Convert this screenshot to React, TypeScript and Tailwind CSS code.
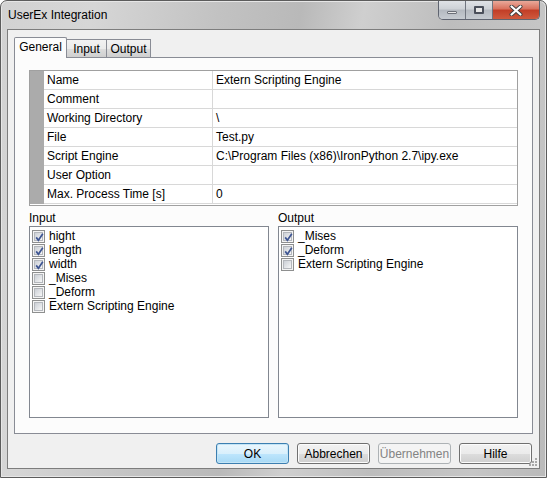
import React from "react";

const font = { fontFamily: '"Liberation Sans", Arial, sans-serif' };

function Check({ checked, label }: { checked: boolean; label: string }) {
  return (
    <div className="flex h-[14px] items-center">
      <div className="relative h-[13px] w-[13px] shrink-0 border border-[#8e8f8f] bg-[#f4f4f4] p-[1px]">
        <div className="h-full w-full border border-[#b4b7bc] bg-[linear-gradient(135deg,#cbcfd5_0%,#e4e6e9_60%,#f7f7f7_100%)]" />
        {checked && (
          <svg className="absolute left-[1px] top-[1px]" width="11" height="11" viewBox="0 0 11 11">
            <path d="M2.2 5.4 L4.4 8.2 L8.8 1.8" fill="none" stroke="#3e5592" strokeWidth="1.7" />
          </svg>
        )}
      </div>
      <span className="ml-[4px] whitespace-nowrap text-[12px] leading-[14px] text-black">{label}</span>
    </div>
  );
}

function ListBox({ title, items }: { title: string; items: [string, boolean][] }) {
  return (
    <div className="flex w-[240px] flex-col">
      <div className="h-[16px] text-[12px] leading-[16px] text-black">{title}</div>
      <div className="flex h-[192px] flex-col border border-[#828790] bg-white pl-[2px] pt-[2px]">
        {items.map(([l, c]) => (
          <Check key={l} label={l} checked={c} />
        ))}
      </div>
    </div>
  );
}

function Btn({ label, def, disabled }: { label: string; def?: boolean; disabled?: boolean }) {
  const cls = def
    ? "border-[#3c7fb1] bg-[linear-gradient(#eaf6fd_0%,#d9f0fc_50%,#bee6fd_51%,#a7d9f5_100%)] text-black shadow-[inset_0_0_0_1px_#c4e5f6]"
    : disabled
    ? "border-[#adb2b5] bg-[#f4f4f4] text-[#838383]"
    : "border-[#707070] bg-[linear-gradient(#f2f2f2_0%,#ebebeb_50%,#dddddd_51%,#cfcfcf_100%)] text-black shadow-[inset_0_0_0_1px_#fcfcfc]";
  return (
    <div className={`flex h-[21px] w-[73px] items-center justify-center rounded-[3px] border text-[12px] ${cls}`}>
      {label}
    </div>
  );
}

const rows: [string, string][] = [
  ["Name", "Extern Scripting Engine"],
  ["Comment", ""],
  ["Working Directory", "\\"],
  ["File", "Test.py"],
  ["Script Engine", "C:\\Program Files (x86)\\IronPython 2.7\\ipy.exe"],
  ["User Option", ""],
  ["Max. Process Time [s]", "0"],
];

export default function App() {
  return (
    <div className="h-[479px] w-[548px] overflow-hidden bg-white" style={font}>
      <div className="flex h-[478px] w-[547px] flex-col rounded-t-[7px] border border-[#5c5c5c] bg-[linear-gradient(100deg,#d2d2d2_0%,#d6d6d6_15%,#c2c2c2_35%,#b9b9b9_48%,#cfcfcf_58%,#bdbdbd_72%,#c6c6c6_88%,#bababa_100%)] shadow-[inset_0_0_0_1px_#e6e6e6]">
        <div className="relative flex h-[28px] shrink-0 items-start">
          <div className="pl-[7px] pt-[6px] text-[12px] leading-[16px] text-black">UserEx Integration</div>
          <div className="ml-auto mr-[6px] flex h-[19px] overflow-hidden rounded-b-[5px] border border-t-0 border-[#5f6470]">
            <div className="flex w-[27px] items-center justify-center border-r border-[#70757f] bg-[linear-gradient(#dfe2e6_0%,#cdd1d6_45%,#b4b9c0_50%,#c6cbd1_100%)]">
              <div className="mt-[4px] h-[3px] w-[10px] rounded-[1px] border border-[#6c7079] bg-[#e8e8e8]" />
            </div>
            <div className="flex w-[27px] items-center justify-center border-r border-[#70757f] bg-[linear-gradient(#dfe2e6_0%,#cdd1d6_45%,#b4b9c0_50%,#c6cbd1_100%)]">
              <div className="h-[8px] w-[10px] rounded-[1px] border-[2px] border-[#4a4f5a] bg-[#e6e6e6]" />
            </div>
            <div className="flex w-[46px] items-center justify-center bg-[linear-gradient(#e9a99a_0%,#d8705c_45%,#c23d26_50%,#cf5a3e_100%)]">
              <svg width="14" height="11" viewBox="0 0 14 11">
                <path d="M2.5 1.5 L11.5 9.5 M11.5 1.5 L2.5 9.5" stroke="#3f3f3f" strokeWidth="4" strokeLinecap="round" />
                <path d="M2.5 1.5 L11.5 9.5 M11.5 1.5 L2.5 9.5" stroke="#ffffff" strokeWidth="2.2" strokeLinecap="round" />
              </svg>
            </div>
          </div>
        </div>
        <div className="relative mx-[6px] mb-[8px] flex flex-1 flex-col border border-[#7d7d7d] bg-[#f0f0f0] px-[6px] pt-[7px]">
          <div className="flex h-[20px] items-end">
            <div className="relative z-10 -mb-[1px] flex h-[21px] w-[53px] items-start justify-center rounded-t-[2px] border border-b-0 border-[#898c95] bg-[#fcfcfc] pt-[1px] text-[12px] leading-[16px] text-black">
              General
            </div>
            <div className="flex h-[18px] w-[40px] items-start justify-center border-r border-t border-[#898c95] bg-[linear-gradient(#f2f2f2_0%,#ebebeb_50%,#dddddd_51%,#cfcfcf_100%)] pt-[2px] text-[12px] leading-[15px] text-black">
              Input
            </div>
            <div className="flex h-[18px] w-[44px] items-start justify-center border-r border-t border-[#898c95] bg-[linear-gradient(#f2f2f2_0%,#ebebeb_50%,#dddddd_51%,#cfcfcf_100%)] pt-[2px] text-[12px] leading-[15px] text-black">
              Output
            </div>
          </div>
          <div className="flex h-[377px] flex-col border border-[#898c95] bg-[#fcfcfc] pl-[14px] pr-[14px] pt-[12px]">
            <div className="flex border border-[#a0a0a0] bg-white pb-[1px]">
              <div className="w-[14px] shrink-0 bg-[#ababab]" />
              <div className="flex flex-1 flex-col">
                {rows.map(([k, v]) => (
                  <div key={k} className="flex h-[19px] border-b border-[#d8d8d8] text-[12px] leading-[18px] text-black">
                    <div className="w-[169px] shrink-0 border-r border-[#d8d8d8] pl-[3px]">{k}</div>
                    <div className="flex-1 whitespace-nowrap pl-[3px]">{v}</div>
                  </div>
                ))}
              </div>
            </div>
            <div className="mt-[4px] flex justify-between">
              <ListBox
                title="Input"
                items={[
                  ["hight", true],
                  ["length", true],
                  ["width", true],
                  ["_Mises", false],
                  ["_Deform", false],
                  ["Extern Scripting Engine", false],
                ]}
              />
              <ListBox
                title="Output"
                items={[
                  ["_Mises", true],
                  ["_Deform", true],
                  ["Extern Scripting Engine", false],
                ]}
              />
            </div>
          </div>
          <div className="mt-[9px] flex justify-end gap-[8px] pr-[1px]">
            <Btn label="OK" def />
            <Btn label="Abbrechen" />
            <Btn label="Übernehmen" disabled />
            <Btn label="Hilfe" />
          </div>
          <svg className="absolute bottom-[1px] right-[1px]" width="10" height="10" viewBox="0 0 10 10">
            <g fill="#a8a8a8">
              <rect x="7" y="1" width="2" height="2" />
              <rect x="4" y="4" width="2" height="2" />
              <rect x="7" y="4" width="2" height="2" />
              <rect x="1" y="7" width="2" height="2" />
              <rect x="4" y="7" width="2" height="2" />
              <rect x="7" y="7" width="2" height="2" />
            </g>
          </svg>
        </div>
      </div>
    </div>
  );
}
